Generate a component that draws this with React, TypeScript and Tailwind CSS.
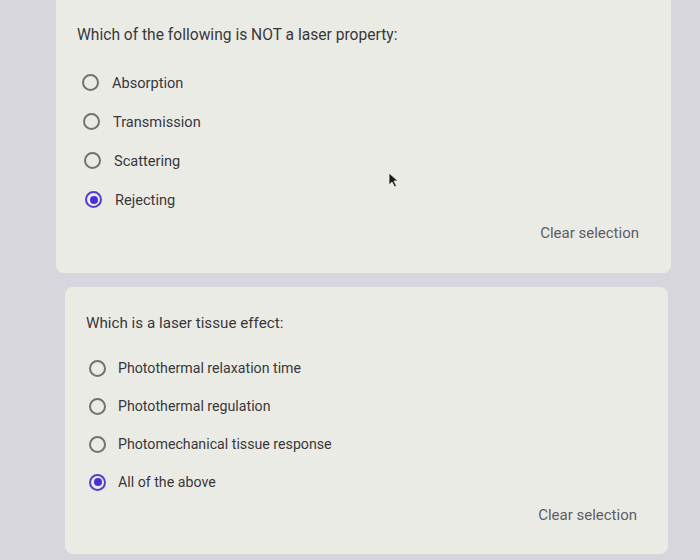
import React from "react"

type Question = {
  title: string
  options: string[]
  selected: number
}

const q1: Question = {
  title: "Which of the following is NOT a laser property:",
  options: ["Absorption", "Transmission", "Scattering", "Rejecting"],
  selected: 3,
}

const q2: Question = {
  title: "Which is a laser tissue effect:",
  options: ["Photothermal relaxation time", "Photothermal regulation", "Photomechanical tissue response", "All of the above"],
  selected: 3,
}

function Radio({ checked }: { checked: boolean }) {
  if (checked) {
    return (
      <span className="flex h-[17px] w-[17px] shrink-0 items-center justify-center rounded-full border-2 border-[#5a3ccc]">
        <span className="h-[8px] w-[8px] rounded-full bg-[#4b2fd1]" />
      </span>
    )
  }
  return <span className="h-[17px] w-[17px] shrink-0 rounded-full border-2 border-[#727275]" />
}

function Cursor() {
  return (
    <svg className="absolute left-[388px] top-[172px]" width="12" height="16" viewBox="0 0 12 16">
      <path d="M1 1 L1 13 L4 10 L6.5 15 L8.5 14 L6 9 L10 9 Z" fill="#1a1a1a" stroke="#f2f2f2" strokeWidth="0.8" />
    </svg>
  )
}

export default function App() {
  return (
    <div className="relative flex h-[560px] w-[700px] flex-col overflow-hidden bg-[#d7d6dd] font-['Roboto',sans-serif] text-[#38383b]">
      {/* first card, its top is cut off by the photo */}
      <div className="ml-[56px] flex h-[273px] w-[615px] flex-col rounded-b-lg bg-[#ebebe6] pl-[21px] pr-[32px] pt-[23px]">
        <h2 className="text-[15.6px] leading-[24px]">{q1.title}</h2>
        <div className="mt-[16px] flex flex-col">
          {q1.options.map((o, i) => (
            <div key={o} className="flex h-[39px] items-center gap-[13px]" style={{ paddingLeft: 5 + i }}>
              <Radio checked={i === q1.selected} />
              <span className="text-[14.6px] leading-5">{o}</span>
            </div>
          ))}
        </div>
        <div className="mt-[4px] self-end text-[15px] leading-5 text-[#5d5d62]">Clear selection</div>
      </div>

      <div className="ml-[65px] mt-[14px] flex h-[267px] w-[603px] flex-col rounded-lg bg-[#ebebe6] pl-[21px] pr-[31px] pt-[24px]">
        <h2 className="text-[15.2px] leading-[24px]">{q2.title}</h2>
        <div className="mt-[14px] flex flex-col">
          {q2.options.map((o, i) => (
            <div key={o} className="flex h-[38px] items-center gap-[12px] pl-[3px]">
              <Radio checked={i === q2.selected} />
              <span className="text-[14.2px] leading-5">{o}</span>
            </div>
          ))}
        </div>
        <div className="mt-[4px] self-end text-[15px] leading-5 text-[#5d5d62]">Clear selection</div>
      </div>

      <Cursor />
    </div>
  )
}
